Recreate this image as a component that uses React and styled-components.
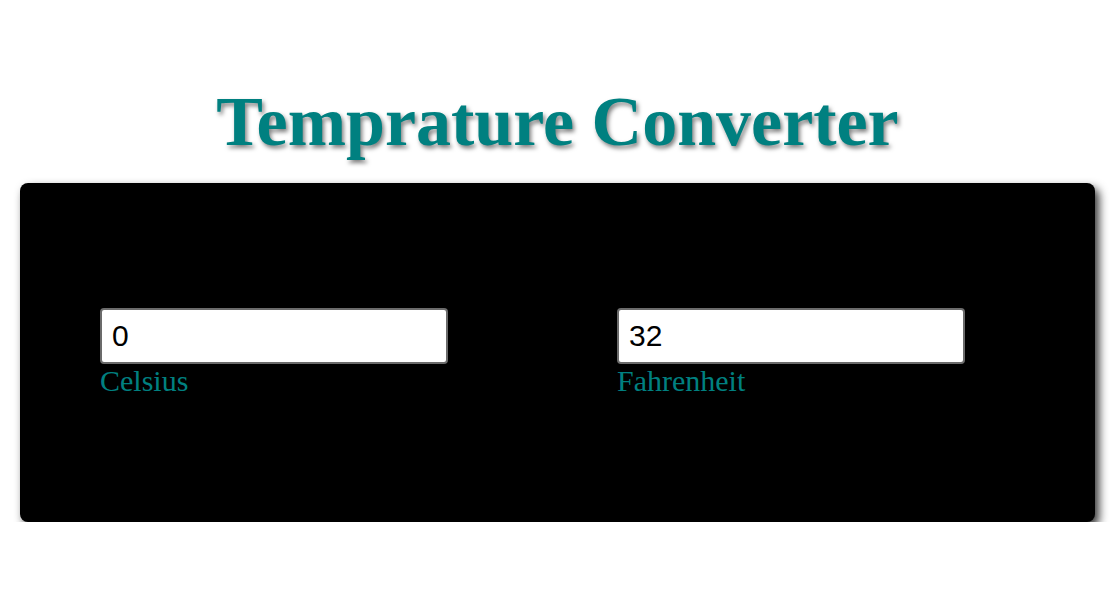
import React, { useState } from 'react';
import styled, { createGlobalStyle } from 'styled-components';

const GlobalStyle = createGlobalStyle`
  html, body {
    margin: 0;
    padding: 0;
    background: #fff;
  }
  body {
    font-family: "Liberation Serif", "Times New Roman", serif;
  }
`;

const Page = styled.div`
  padding: 0 20px;
`;

const Title = styled.h1`
  margin: 0;
  padding-top: 77px;
  padding-bottom: 16px;
  text-align: center;
  font-family: "Liberation Serif", "Times New Roman", serif;
  font-weight: bold;
  font-size: 70px;
  line-height: 90px;
  color: teal;
  text-shadow: 2px 3px 4px rgba(0, 0, 0, 0.5);
`;

const Card = styled.div`
  height: 339px;
  box-sizing: border-box;
  background: #000;
  border-radius: 8px;
  box-shadow: 4px 5px 10px rgba(0, 0, 0, 0.8);
  display: grid;
  grid-template-columns: 517px auto;
  align-items: center;
  padding: 0 0 0 80px;
`;

const Field = styled.div`
  display: flex;
  flex-direction: column;
  align-items: flex-start;
`;

const Input = styled.input`
  width: 348px;
  height: 56px;
  box-sizing: border-box;
  padding: 0 10px;
  border: 2px solid #6b6b6b;
  border-radius: 4px;
  background: #fff;
  font-family: "Liberation Sans", Arial, sans-serif;
  font-size: 30px;
  color: #000;
  outline: none;
`;

const Label = styled.label`
  font-family: "Liberation Serif", "Times New Roman", serif;
  font-size: 30px;
  line-height: 34px;
  color: teal;
`;

export default function App() {
  const [celsius, setCelsius] = useState('0');
  const [fahrenheit, setFahrenheit] = useState('32');

  const onCelsius = (e) => {
    const v = e.target.value;
    setCelsius(v);
    if (v !== '' && !isNaN(v)) setFahrenheit(String((Number(v) * 9) / 5 + 32));
  };

  const onFahrenheit = (e) => {
    const v = e.target.value;
    setFahrenheit(v);
    if (v !== '' && !isNaN(v)) setCelsius(String(((Number(v) - 32) * 5) / 9));
  };

  return (
    <Page>
      <GlobalStyle />
      <Title>Temprature Converter</Title>
      <Card>
        <Field>
          <Input id="celsius" value={celsius} onChange={onCelsius} />
          <Label htmlFor="celsius">Celsius</Label>
        </Field>
        <Field>
          <Input id="fahrenheit" value={fahrenheit} onChange={onFahrenheit} />
          <Label htmlFor="fahrenheit">Fahrenheit</Label>
        </Field>
      </Card>
    </Page>
  );
}
